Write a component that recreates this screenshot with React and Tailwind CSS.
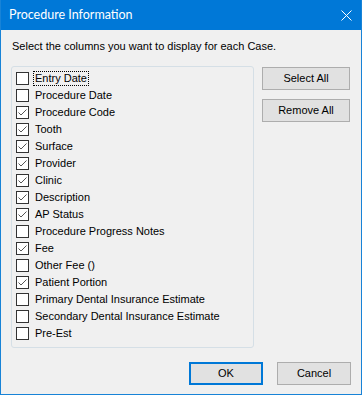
const COLUMNS = [
  { label: 'Entry Date', checked: false, focus: true },
  { label: 'Procedure Date', checked: false },
  { label: 'Procedure Code', checked: true },
  { label: 'Tooth', checked: true },
  { label: 'Surface', checked: true },
  { label: 'Provider', checked: true },
  { label: 'Clinic', checked: true },
  { label: 'Description', checked: true },
  { label: 'AP Status', checked: true },
  { label: 'Procedure Progress Notes', checked: false },
  { label: 'Fee', checked: true },
  { label: 'Other Fee ()', checked: false },
  { label: 'Patient Portion', checked: true },
  { label: 'Primary Dental Insurance Estimate', checked: false },
  { label: 'Secondary Dental Insurance Estimate', checked: false },
  { label: 'Pre-Est', checked: false },
];

function CheckBox({ checked }) {
  return (
    <div className="w-[13px] h-[13px] border border-[#333] bg-white flex-none">
      {checked && (
        <svg width="11" height="11" viewBox="0 0 11 11">
          <polyline points="1.5,5.5 4,8 9.5,2.5" fill="none" stroke="#555" strokeWidth="1" />
        </svg>
      )}
    </div>
  );
}

function Button({ children, primary, className = '' }) {
  return (
    <button
      className={`h-[23px] bg-[#e1e1e1] text-[11px] text-black flex items-center justify-center ${
        primary ? 'border-2 border-[#0078d7]' : 'border border-[#adadad]'
      } ${className}`}
    >
      {children}
    </button>
  );
}

export default function App() {
  return (
    <div
      className="w-[362px] h-[395px] border border-[#1883d7] border-t-0 bg-[#f0f0f0] flex flex-col"
      style={{ fontFamily: '"Liberation Sans", Arial, sans-serif' }}
    >
      <div className="h-[30px] bg-[#0078d7] flex items-center justify-between pl-[8px] pr-[9px] flex-none">
        <span className="text-white text-[12.5px]" style={{ fontFamily: 'Lato, sans-serif' }}>
          Procedure Information
        </span>
        <svg width="11" height="11" viewBox="0 0 11 11">
          <line x1="0.5" y1="0.5" x2="10.5" y2="10.5" stroke="white" strokeWidth="1" />
          <line x1="10.5" y1="0.5" x2="0.5" y2="10.5" stroke="white" strokeWidth="1" />
        </svg>
      </div>

      <div className="flex-1 flex flex-col px-[10px] pt-[8px]">
        <div className="h-[16px] leading-[16px] text-[11px] text-black pl-[1px]">
          Select the columns you want to display for each Case.
        </div>

        <div className="flex gap-[8px] mt-[12px]">
          <div className="w-[243px] h-[282px] border border-[#d5dfe6] rounded-[3px] pt-[3px] pl-[4px]">
            {COLUMNS.map((c) => (
              <div key={c.label} className="h-[17px] flex items-center gap-[5px]">
                <CheckBox checked={c.checked} />
                <span
                  className={`text-[11px] leading-[13px] text-black px-[1px] ${
                    c.focus ? 'outline outline-1 outline-dotted outline-black' : ''
                  }`}
                >
                  {c.label}
                </span>
              </div>
            ))}
          </div>

          <div className="flex flex-col gap-[9px] mt-[1px]">
            <Button className="w-[88px] h-[22px]">Select All</Button>
            <Button className="w-[88px] h-[22px]">Remove All</Button>
          </div>
        </div>

        <div className="flex justify-end gap-[14px] mt-[14px]">
          <Button primary className="w-[74px]">OK</Button>
          <Button className="w-[74px]">Cancel</Button>
        </div>
      </div>
    </div>
  );
}
